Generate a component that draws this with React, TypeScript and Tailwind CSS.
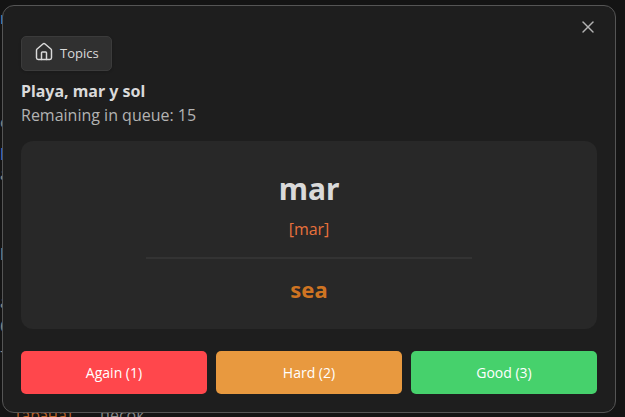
import React from 'react'
import { House, X } from 'lucide-react'

interface Card {
  word: string
  transcription: string
  translation: string
}

const deck = { title: 'Playa, mar y sol', remaining: 15 }

const card: Card = { word: 'mar', transcription: '[mar]', translation: 'sea' }

const grades = [
  { key: 1, label: 'Again', color: 'bg-[#ff474c]' },
  { key: 2, label: 'Hard', color: 'bg-[#e8993f]' },
  { key: 3, label: 'Good', color: 'bg-[#46d16c]' }
]

// words of the note that run under the left edge of the dialog
const noteWords = [
  { text: 'n', className: 'h-26 text-[#5f9fc4]' },
  { text: 'c', className: 'h-8 text-[#8a8a8a]' },
  { text: 'l', className: 'h-5 text-[#4f7fd0]' },
  { text: 'a', className: 'h-20 text-[#8a8a8a]' },
  { text: 'l', className: 'h-12 text-[#9a9a9a]' },
  { text: 'a', className: 'h-6 text-[#8a8a8a]' },
  { text: 'б', className: 'h-6 text-[#8a8a8a]' },
  { text: '–', className: 'h-6 text-[#8a8a8a]' }
]

function NoteBackground() {
  return (
    <div aria-hidden="true" className="absolute inset-0 flex flex-col justify-between overflow-hidden pt-1.5">
      <div>
        {noteWords.map((word, index) => (
          <div key={index} className={`leading-6 ${word.className}`}>
            {word.text}
          </div>
        ))}
      </div>
      <div className="-mb-2.5 flex pl-4 leading-6">
        <span className="w-21 text-[#b9622a]">[арэна]</span>
        <span className="text-[#8a8a8a]">песок</span>
      </div>
    </div>
  )
}

export default function App() {
  return (
    <div className="relative min-h-screen overflow-hidden bg-[#141414] pt-[5px] pr-[9px] pl-0.5 font-['Open_Sans','Noto_Sans',sans-serif] text-base">
      <NoteBackground />

      <div
        role="dialog"
        aria-labelledby="deck-title"
        className="relative rounded-xl border border-[#555555] bg-[#1e1e1e] px-[18px] pt-[30px] pb-[18px]"
      >
        <button aria-label="Close" className="absolute top-[11px] right-[17px] text-[#b3b3b3]">
          <X size={20} strokeWidth={1.75} />
        </button>

        <button className="flex h-[35px] items-center gap-1.5 rounded-[5px] border border-[#3b3b3b] bg-[#303030] px-3 text-[13px] text-[#dadada] shadow-sm">
          <House size={20} strokeWidth={1.75} className="mb-1" />
          Topics
        </button>

        <h2 id="deck-title" className="mt-2 font-['Noto_Sans',sans-serif] leading-6 font-bold text-[#dadada]">
          {deck.title}
        </h2>
        <p className="leading-6 text-[#b3b3b3]">Remaining in queue: {deck.remaining}</p>

        <div className="mt-3.5 flex flex-col items-center rounded-xl bg-[#282828] px-4 py-6">
          <div className="font-['Noto_Sans',sans-serif] text-3xl leading-12 font-bold text-[#dadada]">{card.word}</div>
          <div className="mt-1 leading-6 text-[#e8713c]">{card.transcription}</div>
          <hr className="mt-4 mb-3.5 w-3/5 border-t-2 border-[#333333]" />
          <div className="font-['Noto_Sans',sans-serif] text-[22px] leading-8 font-bold text-[#cf7422]">{card.translation}</div>
        </div>

        <div className="mt-[22px] grid grid-cols-3 gap-[9px]">
          {grades.map((grade) => (
            <button key={grade.key} className={`h-[43px] rounded-[5px] text-sm text-white ${grade.color}`}>
              {grade.label} ({grade.key})
            </button>
          ))}
        </div>
      </div>
    </div>
  )
}
